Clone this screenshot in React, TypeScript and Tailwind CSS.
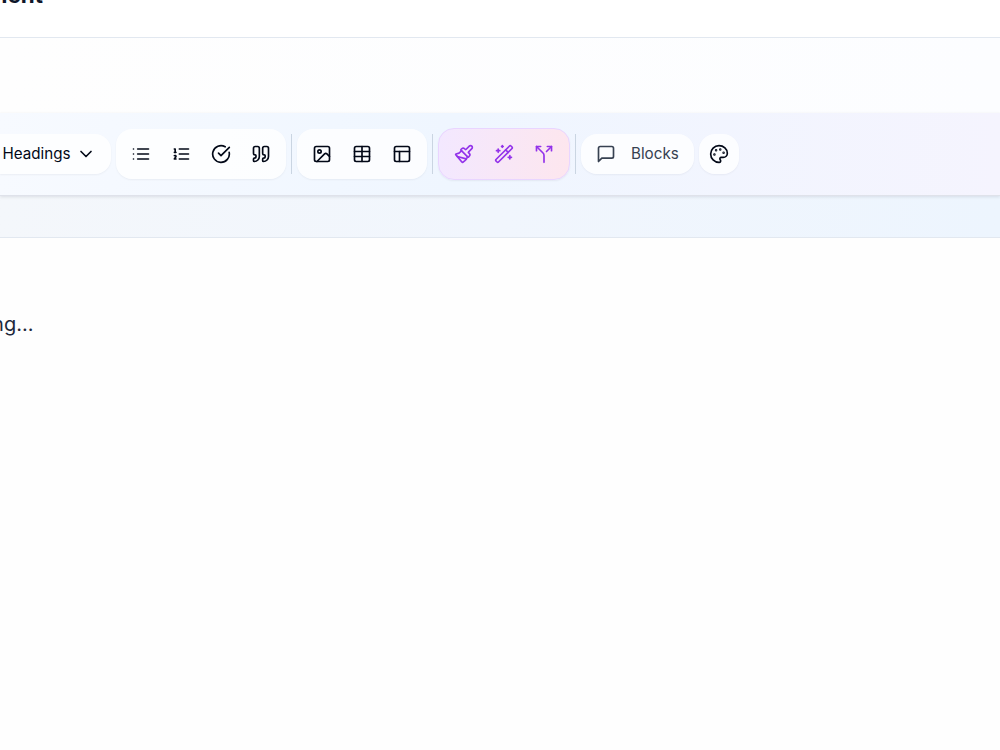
import React, { FC, ReactNode } from "react"
import {
    ChevronDown,
    CircleCheckBig,
    Image,
    Paintbrush,
    Palette,
    PanelsTopLeft,
    Quote,
    Split,
    Table,
    WandSparkles
} from "lucide-react"

type ChildrenProps = {
    children: ReactNode
}

const StrokeIcon: FC<ChildrenProps> = ({ children }) => (
    <svg width={20} height={20} viewBox="0 0 24 24" fill="none" stroke="currentColor"
         strokeWidth={2} strokeLinecap="round" strokeLinejoin="round">
        {children}
    </svg>
)

const ListIcon: FC = () => (
    <StrokeIcon>
        <path d="M8 6h13M8 12h13M8 18h13M3 6h.01M3 12h.01M3 18h.01"/>
    </StrokeIcon>
)

const ListOrderedIcon: FC = () => (
    <StrokeIcon>
        <path d="M10 6h11M10 12h11M10 18h11M4 6h1v4M4 10h2"/>
        <path d="M6 18H4c0-1 2-2 2-3s-1-1.5-2-1"/>
    </StrokeIcon>
)

const MessageIcon: FC = () => (
    <StrokeIcon>
        <path d="M21 15a2 2 0 0 1-2 2H7l-4 4V5a2 2 0 0 1 2-2h14a2 2 0 0 1 2 2z"/>
    </StrokeIcon>
)

const ToolButton: FC<ChildrenProps> = ({ children }) => (
    <button className="flex size-10 items-center justify-center rounded-xl">
        {children}
    </button>
)

const ToolGroup: FC<ChildrenProps> = ({ children }) => (
    <div className="flex rounded-2xl bg-white/80 p-[5px] shadow-[0_1px_2px_rgba(15,23,42,0.05)]">
        {children}
    </div>
)

const Separator: FC = () => <div className="h-10 w-px bg-slate-300"/>

const Toolbar: FC = () => (
    <div className="relative flex h-[83px] items-center gap-[5px] border-b border-[#dfe2ea] bg-linear-to-r from-[#f7faff] via-[#eff6ff] via-45% to-[#f5f4fe] text-[#020817] shadow-[0_1px_3px_rgba(15,23,42,0.11)]">
        <button className="flex h-10 w-[111px] items-center justify-between rounded-r-2xl bg-white/80 pr-[15px] pl-[2.5px] text-[15.2px] shadow-[0_1px_2px_rgba(15,23,42,0.05)]">
            Headings
            <ChevronDown size={20}/>
        </button>

        <ToolGroup>
            <ToolButton><ListIcon/></ToolButton>
            <ToolButton><ListOrderedIcon/></ToolButton>
            <ToolButton><CircleCheckBig size={20}/></ToolButton>
            <ToolButton><Quote size={20}/></ToolButton>
        </ToolGroup>

        <Separator/>

        <ToolGroup>
            <ToolButton><Image size={20}/></ToolButton>
            <ToolButton><Table size={20}/></ToolButton>
            <ToolButton><PanelsTopLeft size={20}/></ToolButton>
        </ToolGroup>

        <Separator/>

        <div className="flex rounded-2xl border border-[#e9d5ff] bg-linear-to-r from-[#f3e8ff] to-[#fde6ee] p-[5px] text-[#9333ea] shadow-[0_1px_2px_rgba(15,23,42,0.06)]">
            <ToolButton><Paintbrush size={20}/></ToolButton>
            <ToolButton><WandSparkles size={20}/></ToolButton>
            <ToolButton><Split size={20}/></ToolButton>
        </div>

        <Separator/>

        <button className="flex h-10 w-[113px] items-center gap-[15px] rounded-2xl bg-white/80 pl-[15px] text-[15.2px] text-[#374151] shadow-[0_1px_2px_rgba(15,23,42,0.05)]">
            <MessageIcon/>
            Blocks
        </button>

        <button className="flex size-10 items-center justify-center rounded-2xl bg-white/80 shadow-[0_1px_2px_rgba(15,23,42,0.05)]">
            <Palette size={20}/>
        </button>
    </div>
)

const App: FC = () => (
    <div className="flex h-screen flex-col overflow-hidden bg-white font-['Inter',sans-serif]">
        <header className="flex h-[38px] shrink-0 items-start border-b border-slate-200">
            <div className="flex w-[43px] justify-end">
                <h1 className="-mt-[19px] text-[22.4px] leading-7 font-bold text-slate-900">Document</h1>
            </div>
        </header>

        <section className="h-[200px] shrink-0 border-b border-slate-200 bg-linear-to-r from-[#f4f7fb] via-[#f1f6fd] to-[#edf5fe]">
            <div className="h-[75px] bg-linear-to-r from-[#fefefe] to-[#fcfdff]"/>
            <Toolbar/>
        </section>

        <main className="flex-1 bg-[#fefefe] pt-[70px]">
            <div className="flex w-[33.5px] justify-end">
                <p className="text-xl leading-8 whitespace-nowrap text-[#1e293b]">Start writing...</p>
            </div>
        </main>
    </div>
)

export default App
